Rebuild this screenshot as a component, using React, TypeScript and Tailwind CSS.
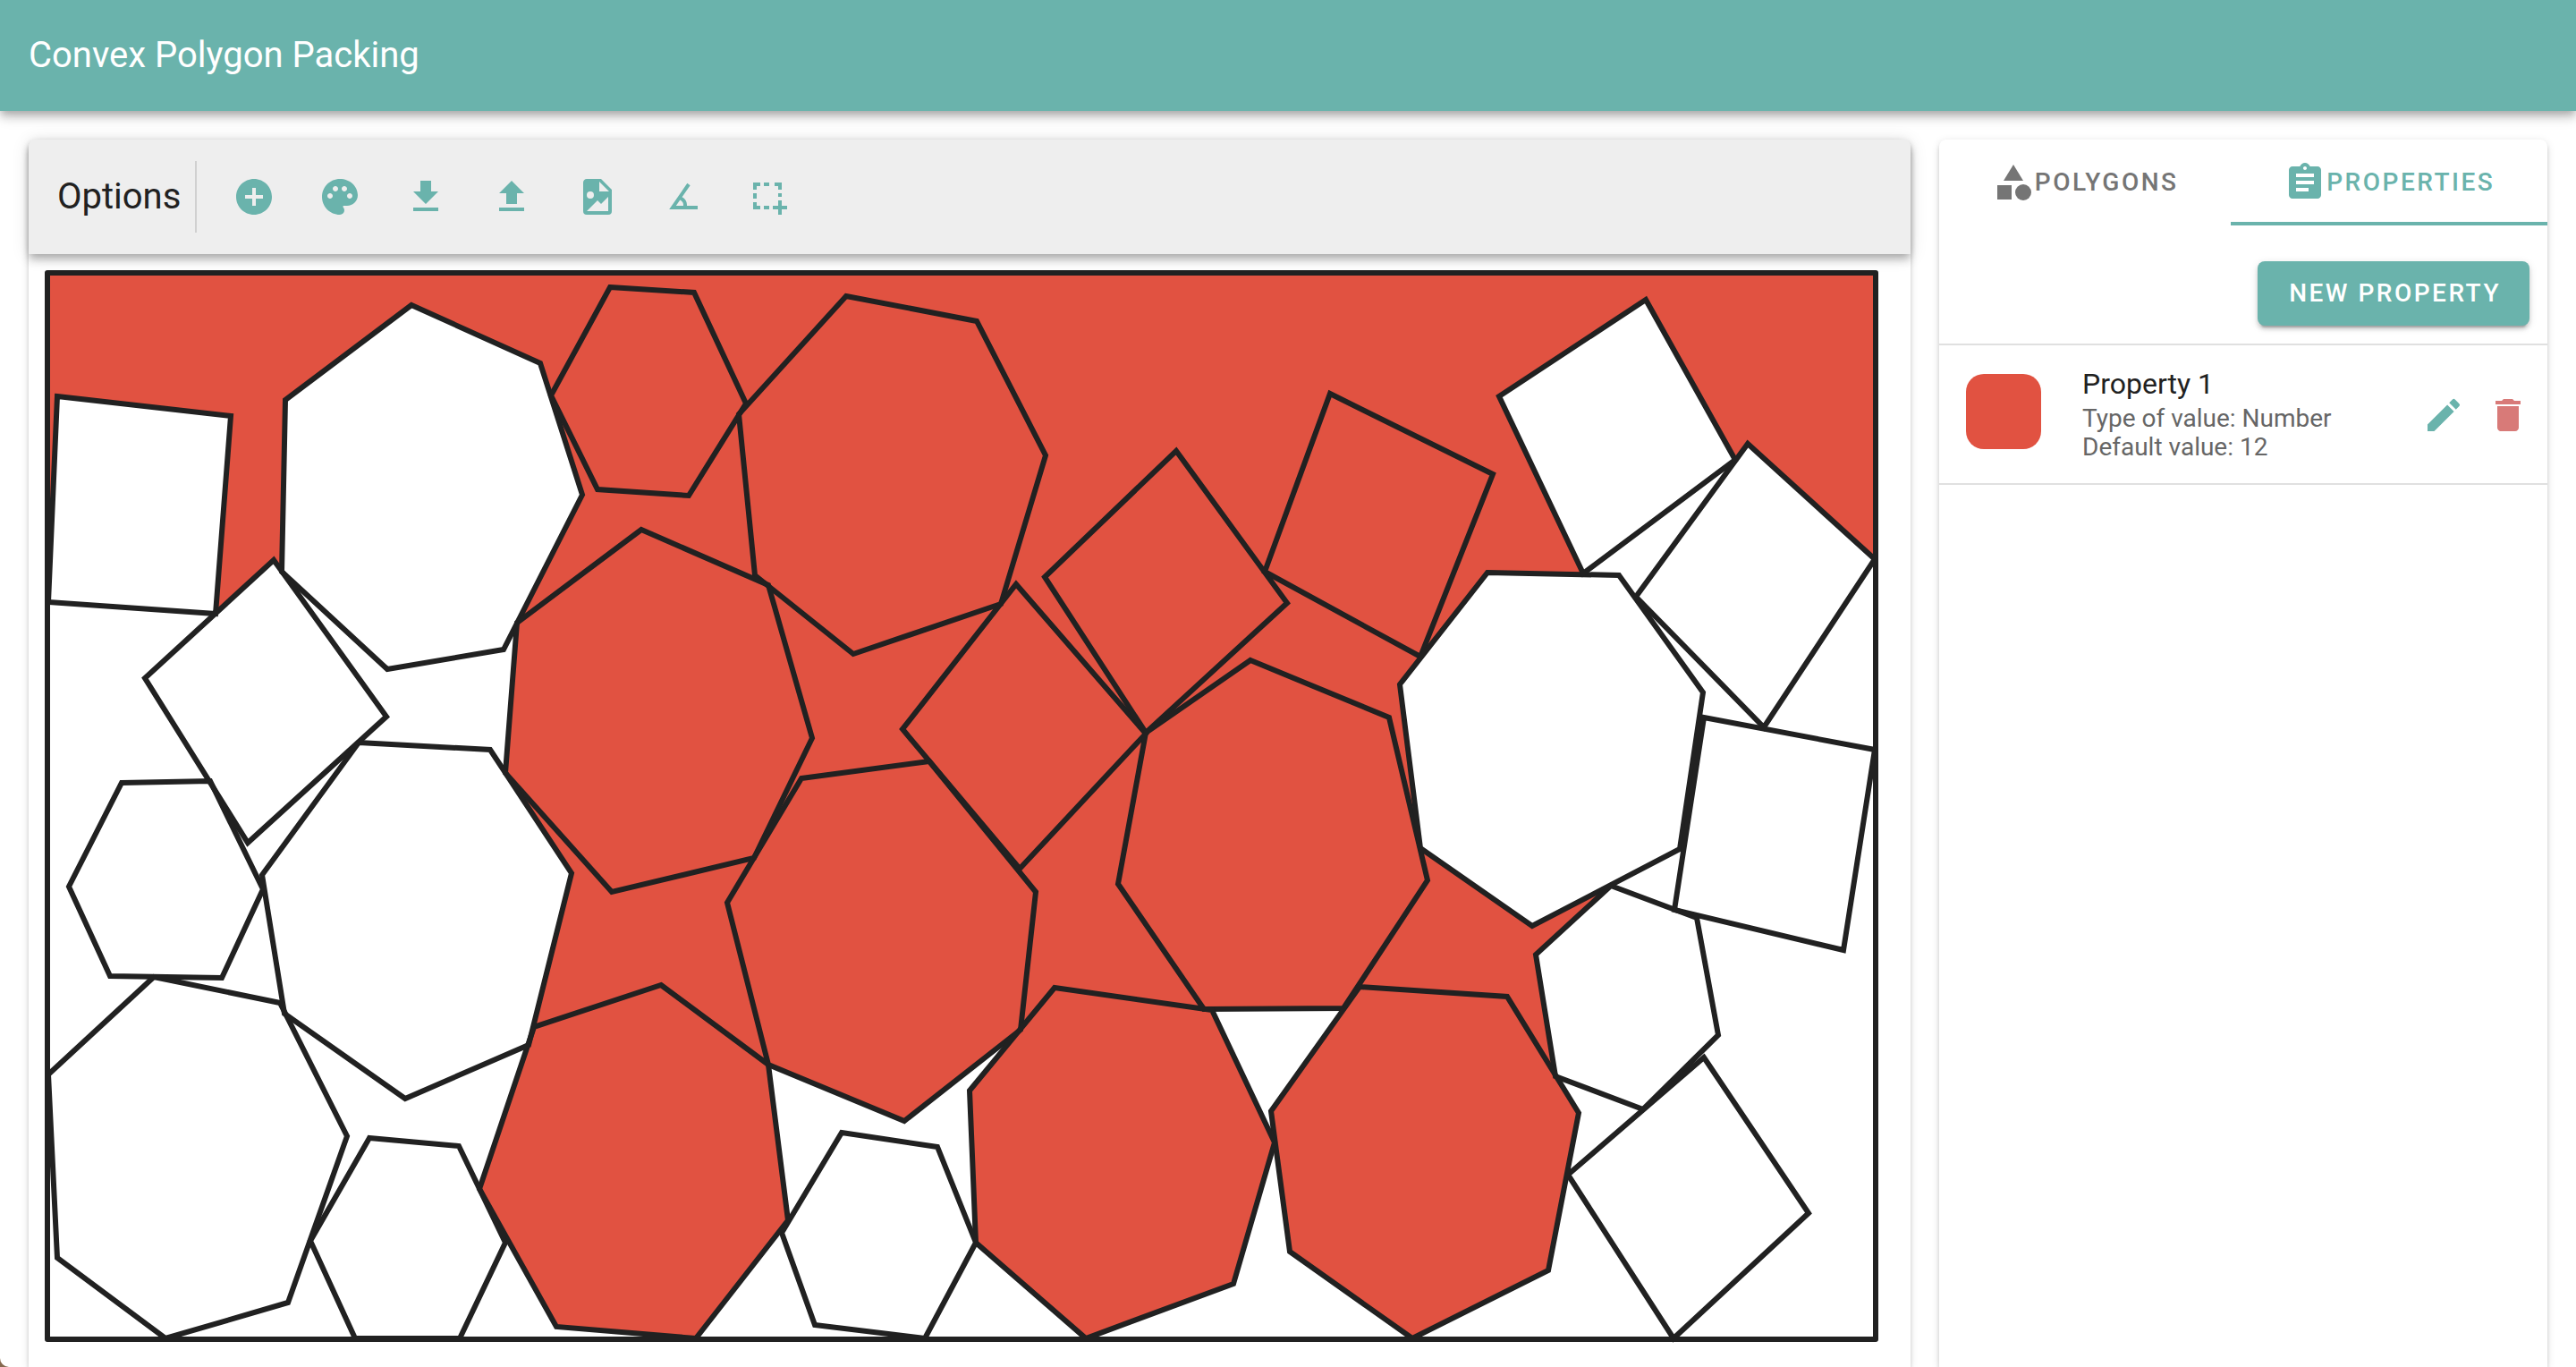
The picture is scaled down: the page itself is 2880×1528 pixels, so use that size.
import React from "react";
import { MdAddCircle, MdPalette, MdCategory, MdAssignment, MdEdit, MdDelete } from "react-icons/md";

type Point = [number, number];
type Shape = { filled: boolean; points: Point[] };

const INK = "#212121";
const RED = "#e15241";

const shapes: Shape[] = [
  { filled: false, points: [[64, 443], [258, 465], [241, 686], [54, 673]] },
  { filled: false, points: [[460, 341], [604, 406], [651, 553], [563, 726], [433, 748], [315, 639], [319, 447]] },
  { filled: false, points: [[306, 626], [432, 801], [277, 942], [162, 758]] },
  { filled: true, points: [[682, 321], [776, 327], [834, 451], [770, 554], [668, 547], [616, 442]] },
  { filled: true, points: [[946, 331], [1092, 359], [1169, 509], [1119, 675], [954, 731], [844, 643], [826, 463]] },
  { filled: true, points: [[717, 592], [859, 654], [908, 825], [843, 959], [684, 997], [565, 864], [578, 696]] },
  { filled: true, points: [[896, 870], [1039, 851], [1158, 997], [1141, 1151], [1011, 1253], [859, 1190], [813, 1009]] },
  { filled: true, points: [[1136, 653], [1281, 820], [1140, 971], [1009, 815]] },
  { filled: true, points: [[1315, 504], [1439, 674], [1281, 819], [1168, 645]] },
  { filled: true, points: [[1487, 440], [1669, 530], [1588, 734], [1414, 639]] },
  { filled: true, points: [[1398, 738], [1553, 802], [1596, 984], [1502, 1127], [1346, 1128], [1250, 988], [1281, 819]] },
  { filled: false, points: [[1663, 640], [1810, 643], [1904, 774], [1878, 949], [1713, 1035], [1588, 948], [1565, 765]] },
  { filled: false, points: [[1840, 335], [1940, 514], [1770, 641], [1676, 443]] },
  { filled: false, points: [[1954, 496], [2096, 625], [1972, 813], [1829, 667]] },
  { filled: false, points: [[1905, 802], [2096, 838], [2061, 1062], [1872, 1017]] },
  { filled: false, points: [[1801, 990], [1897, 1026], [1921, 1157], [1837, 1240], [1739, 1203], [1717, 1067]] },
  { filled: false, points: [[1905, 1182], [2022, 1356], [1871, 1496], [1753, 1313]] },
  { filled: true, points: [[1520, 1103], [1685, 1114], [1765, 1244], [1731, 1420], [1579, 1496], [1442, 1399], [1421, 1242]] },
  { filled: true, points: [[1179, 1104], [1355, 1129], [1425, 1277], [1379, 1435], [1214, 1496], [1091, 1389], [1084, 1219]] },
  { filled: false, points: [[941, 1266], [1048, 1282], [1091, 1389], [1034, 1496], [911, 1481], [874, 1378]] },
  { filled: true, points: [[739, 1101], [859, 1190], [881, 1364], [778, 1496], [622, 1483], [536, 1329], [597, 1148]] },
  { filled: false, points: [[413, 1272], [513, 1281], [565, 1389], [514, 1496], [397, 1496], [347, 1387]] },
  { filled: false, points: [[172, 1092], [313, 1121], [388, 1270], [322, 1456], [185, 1496], [64, 1406], [54, 1201]] },
  { filled: false, points: [[136, 875], [235, 873], [294, 994], [248, 1093], [123, 1091], [77, 991]] },
  { filled: false, points: [[401, 830], [548, 838], [639, 976], [591, 1168], [453, 1228], [318, 1133], [293, 978]] },
];

const spill =
  "53,305 2097,305 2096,625 1954,496 1940,514 1770,641 1713,1035 1801,990 1739,1203 1502,1127 1346,1128 1141,1151 859,1190 597,1148 639,976 565,864 578,696 563,726 315,639 306,626 241,686 54,673";

const toText = (points: Point[]) => points.map((p) => p.join(",")).join(" ");

function Glyph({ d }: { d: string }) {
  return (
    <svg viewBox="0 0 24 24" className="size-12" fill="currentColor" aria-hidden="true">
      <path d={d} />
    </svg>
  );
}

const tools: { label: string; icon: React.ReactNode }[] = [
  { label: "Add polygon", icon: <MdAddCircle className="size-12" /> },
  { label: "Colours", icon: <MdPalette className="size-12" /> },
  { label: "Download", icon: <Glyph d="M5 20h14v-2H5v2M19 9h-4V3H9v6H5l7 7 7-7z" /> },
  { label: "Upload", icon: <Glyph d="M9 16v-6H5l7-7 7 7h-4v6H9m-4 4v-2h14v2H5z" /> },
  {
    label: "Export image",
    icon: (
      <Glyph d="M13 9h5.5L13 3.5V9M6 2h8l6 6v12a2 2 0 0 1-2 2H6a2 2 0 0 1-2-2V4c0-1.11.89-2 2-2m0 18h12v-8l-4 4-2-2-6 6M8 9a2 2 0 0 0-2 2 2 2 0 0 0 2 2 2 2 0 0 0 2-2 2 2 0 0 0-2-2z" />
    ),
  },
  {
    label: "Rotate",
    icon: (
      <Glyph d="M20 19H4.09L14.18 4.43l1.64 1.14-4.54 6.56c1.61.83 2.72 2.49 2.72 4.41 0 .16 0 .31-.03.46H20v2M7.91 17h4.05c.04-.15.04-.3.04-.46 0-1.26-.76-2.32-1.86-2.76L7.91 17z" />
    ),
  },
  {
    label: "Resize area",
    icon: (
      <Glyph d="M3 4h4v2H5v2H3zM9 4h3v2H9zM15 4h4v4h-2V6h-2zM3 10h2v3H3zM17 10h2v2h-2zM3 15h2v2h2v2H3zM9 17h3v2H9zM17 14h2v3h3v2h-3v3h-2v-3h-3v-2h3z" />
    ),
  },
];

function Board() {
  return (
    <svg viewBox="32 284 2104 1244" className="block w-full" role="img" aria-label="Packed polygons">
      <polygon points={spill} fill={RED} />
      {shapes.map((s, i) => (
        <polygon key={i} points={toText(s.points)} fill={s.filled ? RED : "#ffffff"} />
      ))}
      <g fill="none" stroke={INK} strokeWidth="6">
        {shapes.map((s, i) => (
          <polygon key={i} points={toText(s.points)} />
        ))}
        <rect x="53" y="305" width="2044" height="1192" strokeLinejoin="round" />
      </g>
    </svg>
  );
}

export default function App() {
  return (
    <div className="relative flex min-h-screen flex-col bg-white font-[Roboto,sans-serif] text-[#212121]">
      <header className="z-10 flex h-31 items-center bg-[#6ab3ac] px-8 shadow-[0_4px_8px_-2px_rgba(0,0,0,0.2),0_8px_10px_0_rgba(0,0,0,0.14),0_2px_20px_0_rgba(0,0,0,0.12)]">
        <h1 className="text-[40px] leading-[64px] font-normal text-white">Convex Polygon Packing</h1>
      </header>

      <main className="grid flex-1 grid-cols-12 gap-8 px-8 pt-8">
        <section className="col-span-9 rounded-t-lg bg-white shadow-[0_6px_2px_-4px_rgba(0,0,0,0.2),0_4px_4px_0_rgba(0,0,0,0.14),0_2px_10px_0_rgba(0,0,0,0.12)]">
          <div className="flex h-32 items-center rounded-t-lg bg-[#eeeeee] px-8 shadow-[0_4px_8px_-2px_rgba(0,0,0,0.2),0_8px_10px_0_rgba(0,0,0,0.14),0_2px_20px_0_rgba(0,0,0,0.12)]">
            <h2 className="mr-4 text-[40px] leading-[64px] font-normal">Options</h2>
            <div className="mr-4 h-20 w-0.5 bg-[#d0d0d0]" />
            {tools.map((t) => (
              <button key={t.label} type="button" aria-label={t.label} className="p-6 text-[#6ab3ac]">
                {t.icon}
              </button>
            ))}
          </div>
          <Board />
        </section>

        <aside className="col-span-3 rounded-t-lg bg-white shadow-[0_6px_2px_-4px_rgba(0,0,0,0.2),0_4px_4px_0_rgba(0,0,0,0.14),0_2px_10px_0_rgba(0,0,0,0.12)]">
          <div role="tablist" className="flex h-24 text-[28px] font-medium tracking-[2.5px]">
            <button type="button" role="tab" aria-selected="false" className="flex flex-auto items-center justify-center text-[#757575]">
              <MdCategory className="size-12" />
              POLYGONS
            </button>
            <button
              type="button"
              role="tab"
              aria-selected="true"
              className="flex flex-auto items-center justify-center text-[#6ab3ac] shadow-[inset_0_-4px_0_#6ab3ac]"
            >
              <MdAssignment className="size-12" />
              PROPERTIES
            </button>
          </div>

          <div className="flex justify-end border-b-2 border-[#e0e0e0] px-5 pt-10 pb-5">
            <button
              type="button"
              className="h-18 rounded-lg bg-[#6ab3ac] pr-8 pl-[35px] text-[28px] font-medium tracking-[2.5px] text-white shadow-[0_6px_2px_-4px_rgba(0,0,0,0.2),0_4px_4px_0_rgba(0,0,0,0.14),0_2px_10px_0_rgba(0,0,0,0.12)]"
            >
              NEW PROPERTY
            </button>
          </div>

          <ul>
            <li className="flex items-start border-b-2 border-[#e0e0e0] pt-[22px] pr-2 pb-6 pl-[30px]">
              <div className="mt-[10px] size-21 shrink-0 rounded-[20px] bg-[#e15241]" />
              <div className="ml-[46px] grow">
                <p className="mb-0.5 text-[32px] leading-[42px]">Property 1</p>
                <p className="text-[28px] leading-[32px] text-[#666666]">
                  Type of value: Number
                  <br />
                  Default value: 12
                </p>
              </div>
              <button type="button" aria-label="Edit property" className="mt-5 p-3 text-[#6ab3ac]">
                <MdEdit className="size-12" />
              </button>
              <button type="button" aria-label="Delete property" className="mt-5 p-3 text-[#d87a78]">
                <MdDelete className="size-12" />
              </button>
            </li>
          </ul>
        </aside>
      </main>

      <svg viewBox="0 0 10 10" className="absolute bottom-0 left-0 size-2.5" aria-hidden="true">
        <path d="M0 0A10 10 0 0 0 10 10H0z" fill="#86694f" />
      </svg>
    </div>
  );
}
